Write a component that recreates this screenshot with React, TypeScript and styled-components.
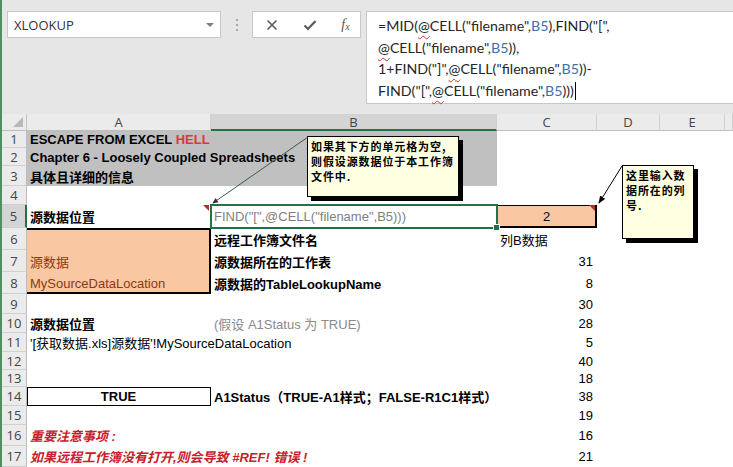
import React from "react";
import styled, { createGlobalStyle } from "styled-components";

const GlobalStyle = createGlobalStyle`
  html, body {
    margin: 0;
    padding: 0;
    background: #fff;
    overflow: hidden;
  }
  body {
    font-family: "Liberation Sans", "Noto Sans CJK SC", sans-serif;
  }
`;

const GRAY = "#c0c0c0";
const ORANGE = "#f9c7a1";
const BROWN = "#8b3a14";
const RED = "#c8202a";
const GREEN = "#217346";

type Cell = {
  text?: React.ReactNode;
  span?: number;
  bold?: boolean;
  italic?: boolean;
  color?: string;
  align?: "left" | "center" | "right";
  fill?: string;
  edge?: [number, number, number, number];
  active?: boolean;
  note?: boolean;
};

type Row = { n: number; h: number; cells: Cell[] };

const e = (): Cell => ({});
const num = (n: number): Cell => ({ text: n, align: "right" });

const Hell = styled.span`
  color: #e0363b;
`;

// each row covers columns A, B, C, D, E and the cut-off column on the right
const rows: Row[] = [
  {
    n: 1,
    h: 17,
    cells: [
      { span: 2, fill: GRAY, bold: true, text: <>ESCAPE FROM EXCEL <Hell>HELL</Hell></> },
      e(), e(), e(), e(),
    ],
  },
  {
    n: 2,
    h: 18,
    cells: [
      { span: 2, fill: GRAY, bold: true, text: "Chapter 6 - Loosely Coupled Spreadsheets" },
      e(), e(), e(), e(),
    ],
  },
  {
    n: 3,
    h: 20,
    cells: [{ span: 2, fill: GRAY, bold: true, text: "具体且详细的信息" }, e(), e(), e(), e()],
  },
  { n: 4, h: 19, cells: [e(), e(), e(), e(), e(), e()] },
  {
    n: 5,
    h: 23,
    cells: [
      { bold: true, text: "源数据位置", note: true },
      { active: true, color: "#7f7f7f", text: 'FIND("[",@CELL("filename",B5)))' },
      { fill: ORANGE, align: "center", text: 2, edge: [1, 2, 2, 0], note: true },
      e(), e(), e(),
    ],
  },
  {
    n: 6,
    h: 22,
    cells: [
      { fill: ORANGE, edge: [2, 2, 0, 0] },
      { bold: true, text: "远程工作簿文件名" },
      { text: "列B数据" },
      e(), e(), e(),
    ],
  },
  {
    n: 7,
    h: 22,
    cells: [
      { fill: ORANGE, color: BROWN, text: "源数据", edge: [0, 2, 0, 0] },
      { bold: true, text: "源数据所在的工作表" },
      num(31),
      e(), e(), e(),
    ],
  },
  {
    n: 8,
    h: 22,
    cells: [
      { fill: ORANGE, color: BROWN, text: "MySourceDataLocation", edge: [0, 2, 2, 0] },
      { bold: true, text: "源数据的TableLookupName" },
      num(8),
      e(), e(), e(),
    ],
  },
  { n: 9, h: 20, cells: [e(), e(), num(30), e(), e(), e()] },
  {
    n: 10,
    h: 19,
    cells: [
      { bold: true, text: "源数据位置" },
      { color: "#8a8a8a", text: "(假设 A1Status 为 TRUE)" },
      num(28),
      e(), e(), e(),
    ],
  },
  {
    n: 11,
    h: 19,
    cells: [{ text: "'[获取数据.xls]源数据'!MySourceDataLocation" }, e(), num(5), e(), e(), e()],
  },
  { n: 12, h: 18, cells: [e(), e(), num(40), e(), e(), e()] },
  { n: 13, h: 17, cells: [e(), e(), num(18), e(), e(), e()] },
  {
    n: 14,
    h: 19,
    cells: [
      { bold: true, align: "center", text: "TRUE", edge: [1, 1, 1, 1] },
      { bold: true, text: "A1Status（TRUE-A1样式；FALSE-R1C1样式）" },
      num(38),
      e(), e(), e(),
    ],
  },
  { n: 15, h: 19, cells: [e(), e(), num(19), e(), e(), e()] },
  {
    n: 16,
    h: 21,
    cells: [{ bold: true, italic: true, color: RED, text: "重要注意事项 :" }, e(), num(16), e(), e(), e()],
  },
  {
    n: 17,
    h: 21,
    cells: [
      { bold: true, italic: true, color: RED, text: "如果远程工作簿没有打开,则会导致 #REF! 错误 !" },
      e(),
      num(21),
      e(), e(), e(),
    ],
  },
];

const columns = ["A", "B", "C", "D", "E", ""];

/* ---------- page & toolbar ---------- */

const Page = styled.div`
  position: relative;
  width: 733px;
  height: 467px;
  overflow: hidden;
  background: #fff;

  &::before {
    content: "";
    position: absolute;
    left: 0;
    top: 0;
    bottom: 0;
    width: 2px;
    background: #4f8f60;
    z-index: 6;
  }
`;

const Toolbar = styled.div`
  height: 114px;
  box-sizing: border-box;
  background: #e6e6e6;
  display: flex;
  align-items: flex-start;
  padding: 11px 0 0 7px;
`;

const NameBox = styled.div`
  width: 214px;
  height: 27px;
  box-sizing: border-box;
  flex-shrink: 0;
  background: #fff;
  border: 1px solid #c8c8c8;
  display: flex;
  align-items: center;
  justify-content: space-between;
  padding: 0 6px 0 6px;
  font: 13px "Open Sans", sans-serif;
  color: #333;
`;

const DropArrow = styled.span`
  width: 0;
  height: 0;
  border-left: 4px solid transparent;
  border-right: 4px solid transparent;
  border-top: 4px solid #808080;
`;

const Splitter = styled.div`
  width: 31px;
  height: 27px;
  flex-shrink: 0;
  display: flex;
  flex-direction: column;
  align-items: center;
  justify-content: center;
  gap: 3px;

  span {
    width: 2px;
    height: 2px;
    background: #a8a8a8;
  }
`;

const ButtonGroup = styled.div`
  width: 109px;
  height: 27px;
  box-sizing: border-box;
  flex-shrink: 0;
  background: #fff;
  border: 1px solid #c8c8c8;
  display: grid;
  grid-template-columns: 38px 38px 33px;
  align-items: center;
  justify-items: center;
  color: #5a5a5a;
`;

const Fx = styled.span`
  font-family: "Liberation Serif", serif;
  font-style: italic;
  font-size: 14px;
  color: #555;

  sub {
    font-size: 10px;
    vertical-align: -1px;
  }
`;

const FormulaBox = styled.div`
  margin-left: 5px;
  width: 380px;
  height: 93px;
  box-sizing: border-box;
  flex-shrink: 0;
  background: #fff;
  border: 1px solid #c8c8c8;
  border-right: none;
  padding: 3px 0 0 11px;
  font: 14.2px Lato, "Open Sans", sans-serif;
  line-height: 21.7px;
  color: #262626;
  white-space: nowrap;
`;

const Ref = styled.span`
  color: #3c6eb4;
`;

const Squiggle = styled.span`
  text-decoration: underline wavy #d0342c;
  text-decoration-thickness: 1px;
  text-underline-offset: 4px;
`;

const Caret = styled.span`
  display: inline-block;
  width: 1px;
  height: 18px;
  background: #000;
  vertical-align: -4px;
  margin-left: 1px;
`;

/* ---------- sheet ---------- */

const Sheet = styled.div<{ $rows: string }>`
  display: grid;
  grid-template-columns: 27px 184px 286px 100px 63px 65px 8px;
  grid-template-rows: 17px ${(p) => p.$rows};
`;

const Corner = styled.div`
  position: relative;
  background: #ebebeb;
  border-right: 1px solid #c6c6c6;
  border-bottom: 1px solid #bdbdbd;
  box-sizing: border-box;

  &::after {
    content: "";
    position: absolute;
    right: 3px;
    bottom: 3px;
    border-left: 10px solid transparent;
    border-bottom: 10px solid #b8b8b8;
  }
`;

const ColHead = styled.div<{ $selected?: boolean }>`
  box-sizing: border-box;
  display: flex;
  align-items: center;
  justify-content: center;
  background: ${(p) => (p.$selected ? "#d4d4d4" : "#ebebeb")};
  border-right: 1px solid #d0d0d0;
  border-bottom: ${(p) => (p.$selected ? `2px solid ${GREEN}` : "1px solid #bdbdbd")};
  font: 13px "Open Sans", sans-serif;
  color: #444;
`;

const RowHead = styled.div<{ $selected?: boolean }>`
  box-sizing: border-box;
  display: flex;
  align-items: center;
  justify-content: center;
  padding-left: 2px;
  background: ${(p) => (p.$selected ? "#d4d4d4" : "#ebebeb")};
  border-right: ${(p) => (p.$selected ? `2px solid ${GREEN}` : "1px solid #bdbdbd")};
  border-bottom: 1px solid #d0d0d0;
  font: 13px "Open Sans", sans-serif;
  color: #444;
`;

const CellBox = styled.div<{
  $span: number;
  $bold?: boolean;
  $italic?: boolean;
  $color?: string;
  $align?: "left" | "center" | "right";
  $fill?: string;
  $edge?: [number, number, number, number];
  $active?: boolean;
  $note?: boolean;
}>`
  position: relative;
  grid-column: span ${(p) => p.$span};
  display: flex;
  align-items: center;
  justify-content: ${(p) =>
    p.$align === "center" ? "center" : p.$align === "right" ? "flex-end" : "flex-start"};
  padding: 0 4px 0 3px;
  white-space: nowrap;
  font-size: 13px;
  font-weight: ${(p) => (p.$bold ? 700 : 400)};
  font-style: ${(p) => (p.$italic ? "italic" : "normal")};
  color: ${(p) => p.$color ?? "#000"};
  background: ${(p) => p.$fill ?? "transparent"};
  box-shadow: ${(p) => {
    if (!p.$edge) return "none";
    const [t, r, b, l] = p.$edge;
    const parts: string[] = [];
    if (t) parts.push(`inset 0 ${t}px 0 #000`);
    if (r) parts.push(`inset -${r}px 0 0 #000`);
    if (b) parts.push(`inset 0 -${b}px 0 #000`);
    if (l) parts.push(`inset ${l}px 0 0 #000`);
    return parts.join(", ");
  }};
  ${(p) =>
    p.$active &&
    `
    z-index: 2;
    outline: 2px solid ${GREEN};
    outline-offset: -1px;
    &::after {
      content: "";
      position: absolute;
      right: -3px;
      bottom: -3px;
      width: 5px;
      height: 5px;
      background: ${GREEN};
      border: 1px solid #fff;
    }
  `}
  ${(p) =>
    p.$note &&
    `
    &::before {
      content: "";
      position: absolute;
      top: 0;
      right: 2px;
      border-left: 6px solid transparent;
      border-top: 6px solid #b0302a;
    }
  `}
`;

/* ---------- comments ---------- */

const Comment = styled.div<{ $x: number; $y: number; $w: number; $h: number }>`
  position: absolute;
  left: ${(p) => p.$x}px;
  top: ${(p) => p.$y}px;
  width: ${(p) => p.$w}px;
  height: ${(p) => p.$h}px;
  box-sizing: border-box;
  background: #ffffe1;
  border: 1px solid #000;
  box-shadow: 4px 4px 0 #000;
  padding: 2px 3px 0 3px;
  font: 700 11px "Noto Sans CJK SC", sans-serif;
  letter-spacing: 0.9px;
  line-height: 15px;
  color: #000;
  white-space: pre;
  z-index: 4;
`;

const Arrows = styled.svg`
  position: absolute;
  left: 0;
  top: 0;
  width: 733px;
  height: 467px;
  pointer-events: none;
  z-index: 5;
`;

const XIcon = () => (
  <svg width="12" height="12" viewBox="0 0 12 12">
    <path d="M1.5 1.5 L10.5 10.5 M10.5 1.5 L1.5 10.5" stroke="#5a5a5a" strokeWidth="1.6" fill="none" />
  </svg>
);

const CheckIcon = () => (
  <svg width="14" height="12" viewBox="0 0 14 12">
    <path d="M1.5 6.5 L5 10 L12.5 2" stroke="#5a5a5a" strokeWidth="2.2" fill="none" />
  </svg>
);

export default function App() {
  const rowTemplate = rows.map((r) => `${r.h}px`).join(" ");

  return (
    <Page>
      <GlobalStyle />
      <Toolbar>
        <NameBox>
          XLOOKUP
          <DropArrow />
        </NameBox>
        <Splitter>
          <span />
          <span />
          <span />
        </Splitter>
        <ButtonGroup>
          <XIcon />
          <CheckIcon />
          <Fx>
            f<sub>x</sub>
          </Fx>
        </ButtonGroup>
        <FormulaBox>
          <div>
            =MID(<Squiggle>@</Squiggle>CELL("filename",<Ref>B5</Ref>),FIND("[",
          </div>
          <div>
            <Squiggle>@</Squiggle>CELL("filename",<Ref>B5</Ref>)),
          </div>
          <div>
            1+FIND("]",<Squiggle>@</Squiggle>CELL("filename",<Ref>B5</Ref>))-
          </div>
          <div>
            FIND("[",<Squiggle>@</Squiggle>CELL("filename",<Ref>B5</Ref>)))
            <Caret />
          </div>
        </FormulaBox>
      </Toolbar>

      <Sheet $rows={rowTemplate}>
        <Corner />
        {columns.map((c) => (
          <ColHead key={c || "rest"} $selected={c === "B"}>
            {c}
          </ColHead>
        ))}
        {rows.map((r) => (
          <React.Fragment key={r.n}>
            <RowHead $selected={r.n === 5}>{r.n}</RowHead>
            {r.cells.map((c, i) => (
              <CellBox
                key={i}
                $span={c.span ?? 1}
                $bold={c.bold}
                $italic={c.italic}
                $color={c.color}
                $align={c.align}
                $fill={c.fill}
                $edge={c.edge}
                $active={c.active}
                $note={c.note}
              >
                {c.text !== undefined && <span>{c.text}</span>}
              </CellBox>
            ))}
          </React.Fragment>
        ))}
      </Sheet>

      <Comment $x={307} $y={136} $w={152} $h={61}>
        {"如果其下方的单元格为空,\n则假设源数据位于本工作簿\n文件中."}
      </Comment>
      <Comment $x={622} $y={165} $w={72} $h={74}>
        {"这里输入数\n据所在的列\n号."}
      </Comment>

      <Arrows viewBox="0 0 733 467">
        <defs>
          <marker id="head" markerWidth="8" markerHeight="8" refX="7" refY="4" orient="auto" markerUnits="userSpaceOnUse">
            <path d="M0 1 L8 4 L0 7 Z" fill="#000" />
          </marker>
          <marker id="headSmall" markerWidth="6" markerHeight="6" refX="5" refY="3" orient="auto" markerUnits="userSpaceOnUse">
            <path d="M0 0.5 L6 3 L0 5.5 Z" fill="#333" />
          </marker>
        </defs>
        <line x1="308" y1="137" x2="213" y2="203" stroke="#3d5a46" strokeWidth="1" markerEnd="url(#headSmall)" />
        <line x1="622" y1="166" x2="599" y2="203" stroke="#000" strokeWidth="1" markerEnd="url(#head)" />
      </Arrows>
    </Page>
  );
}
